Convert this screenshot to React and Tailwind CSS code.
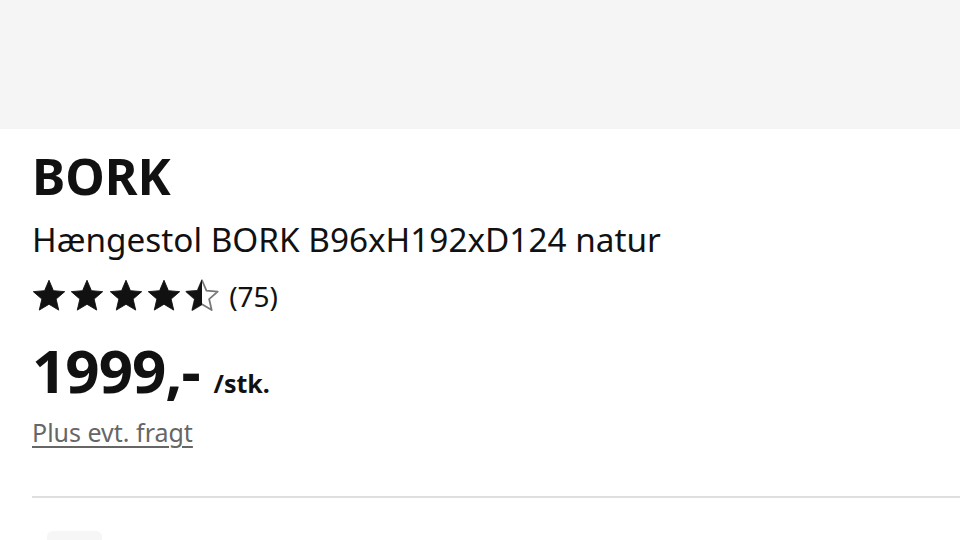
import React from "react";

const STAR =
  "M12 1.5L14.94 8.45 22.46 9.1 16.76 14.05 18.47 21.4 12 17.5 5.53 21.4 7.24 14.05 1.54 9.1 9.06 8.45Z";

const Star = ({ fill = "full" }) => (
  <svg viewBox="0 0 24 24" className="w-[36px] h-[36px]">
    {fill === "half" ? (
      <>
        <defs>
          <clipPath id="halfClip">
            <rect x="0" y="0" width="12" height="24" />
          </clipPath>
        </defs>
        <path d={STAR} fill="none" stroke="#777" strokeWidth="1.2" strokeLinejoin="round" />
        <path d={STAR} fill="#111" stroke="#111" strokeWidth="0.6" strokeLinejoin="round" clipPath="url(#halfClip)" />
      </>
    ) : (
      <path d={STAR} fill="#111" stroke="#111" strokeWidth="0.6" strokeLinejoin="round" />
    )}
  </svg>
);

const App = () => {
  return (
    <div className="w-[960px] h-[540px] overflow-hidden bg-white text-[#111] font-['Noto_Sans',sans-serif]">
      <div className="h-[129px] bg-[#f5f5f5]" />
      <div className="pl-8">
        <h1 className="text-[50px] font-bold leading-none mt-[22px]">BORK</h1>
        <p className="text-[33.3px] leading-none mt-[22px]">
          Hængestol BORK B96xH192xD124 natur
        </p>
        <div className="flex items-center mt-[22px]">
          <div className="flex gap-[2.3px] -ml-[1px]">
            <Star />
            <Star />
            <Star />
            <Star />
            <Star fill="half" />
          </div>
          <span className="text-[28px] leading-none ml-[9px] text-[#111]">(75)</span>
        </div>
        <div className="flex items-baseline mt-[26px]">
          <span className="text-[60px] font-bold leading-none tracking-[-1px]">1999,-</span>
          <span className="text-[25px] font-bold leading-none ml-[14px]">/stk.</span>
        </div>
        <a className="block w-fit text-[25px] leading-none text-[#666] underline underline-offset-4 decoration-[1.5px] mt-[20px]">
          Plus evt. fragt
        </a>
        <div className="h-[2px] bg-[#dfdfdf] mt-[51px]" />
        <div className="mt-[33px] ml-[15px] w-[55px] h-[12px] rounded-t-[6px] bg-[#f6f6f6]" />
      </div>
    </div>
  );
};

export default App;
